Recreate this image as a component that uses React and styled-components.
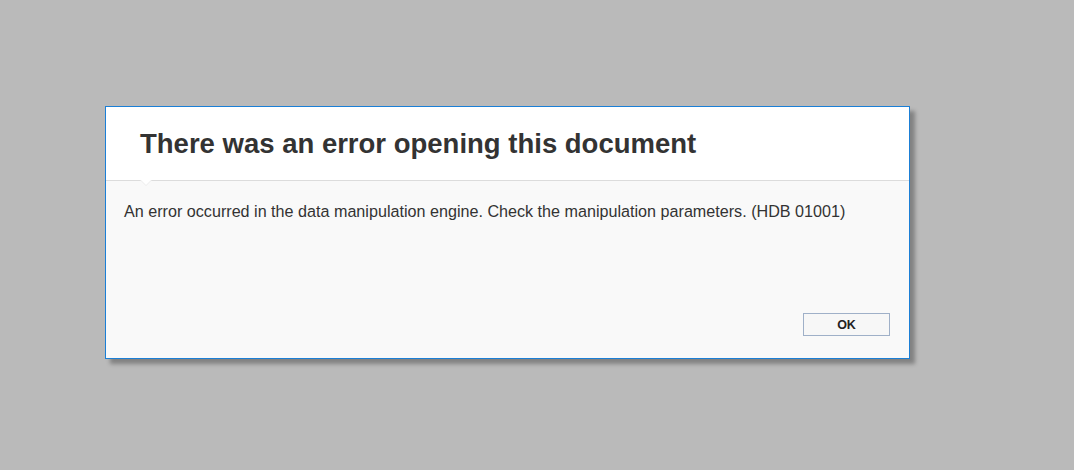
import React from "react";
import styled, { createGlobalStyle } from "styled-components";

const Global = createGlobalStyle`
  html, body {
    margin: 0;
    padding: 0;
    background: #bababa;
    font-family: "Liberation Sans", Arial, sans-serif;
  }
`;

export default function App() {
  return (
    <>
      <Global />
      <Page>
        <Dialog>
          <Header>
            <h1>There was an error opening this document</h1>
          </Header>
          <Body>
            <Notch />
            <p>
              An error occurred in the data manipulation engine. Check the
              manipulation parameters. (HDB 01001)
            </p>
            <Footer>
              <Button>OK</Button>
            </Footer>
          </Body>
        </Dialog>
      </Page>
    </>
  );
}

const Page = styled.div`
  width: 1074px;
  height: 470px;
  padding: 106px 0 0 105px;
  box-sizing: border-box;
`;

const Dialog = styled.div`
  width: 805px;
  height: 253px;
  box-sizing: border-box;
  border: 1px solid #1b7fd6;
  background: #f9f9f9;
  box-shadow: 5px 5px 4px rgba(0, 0, 0, 0.3);
  display: flex;
  flex-direction: column;
`;

const Header = styled.div`
  height: 74px;
  flex-shrink: 0;
  background: #fff;
  border-bottom: 1px solid #dcdcdc;
  padding-left: 34px;
  box-sizing: border-box;

  h1 {
    margin: 0;
    padding-top: 21px;
    font-size: 27.5px;
    font-weight: bold;
    line-height: 32px;
    color: #333;
  }
`;

const Body = styled.div`
  position: relative;
  flex: 1;
  padding: 20px 19px 0 18px;
  display: flex;
  flex-direction: column;

  p {
    margin: 0;
    font-size: 16.15px;
    line-height: 20px;
    color: #333;
  }
`;

const Notch = styled.div`
  position: absolute;
  top: -1px;
  left: 34px;
  width: 10px;
  height: 10px;
  &::before {
    content: "";
    position: absolute;
    left: 0;
    top: 0;
    border-left: 6px solid transparent;
    border-right: 6px solid transparent;
    border-top: 6px solid #ececec;
  }
  &::after {
    content: "";
    position: absolute;
    left: 1px;
    top: 0;
    border-left: 5px solid transparent;
    border-right: 5px solid transparent;
    border-top: 5px solid #fff;
  }
`;

const Footer = styled.div`
  margin-top: auto;
  display: flex;
  justify-content: flex-end;
  padding: 0 0 22px 0;
`;

const Button = styled.button`
  width: 87px;
  height: 23px;
  border: 1px solid #9fb0c8;
  background: #f7f7f7;
  color: #222;
  font-family: "Liberation Sans", Arial, sans-serif;
  font-size: 12.5px;
  font-weight: bold;
  padding: 0;
  cursor: pointer;
`;
